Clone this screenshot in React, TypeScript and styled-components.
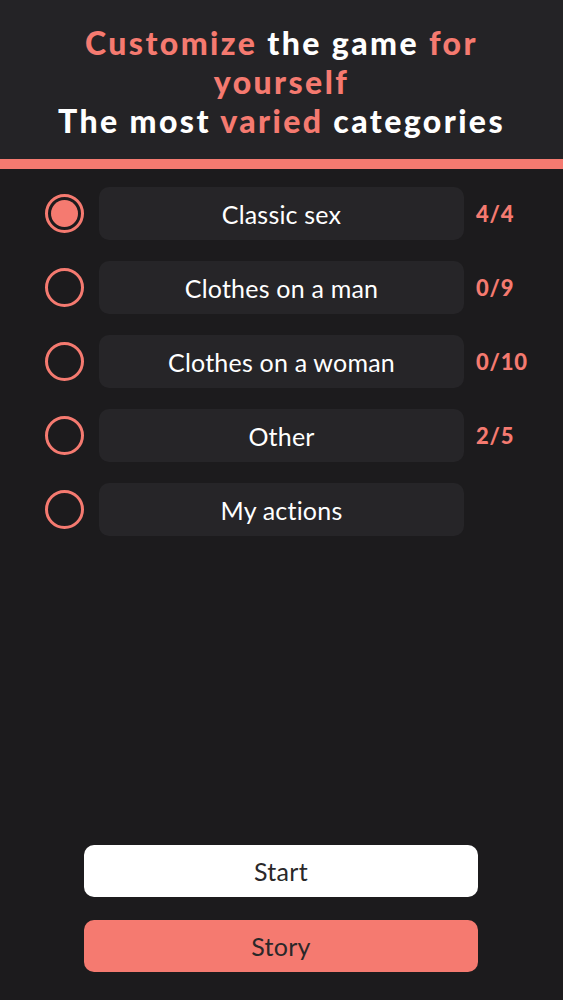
import React, { useState } from "react";
import styled, { createGlobalStyle } from "styled-components";

const Global = createGlobalStyle`
  html, body { margin: 0; padding: 0; background: #1c1b1d; }
  body { font-family: "Lato", "Open Sans", sans-serif; }
`;

const SALMON = "#f57a70";

const Page = styled.div`
  width: 563px;
  height: 1000px;
  display: flex;
  flex-direction: column;
  background: #1c1b1d;
  overflow: hidden;
`;

const Header = styled.header`
  background: #242326;
  padding: 23px 20px 19px;
  border-bottom: 10px solid ${SALMON};
  text-align: center;
`;

const Title = styled.h1`
  margin: 0;
  font-family: "Lato", sans-serif;
  font-weight: 900;
  font-size: 32px;
  line-height: 39px;
  color: #ffffff;
  letter-spacing: 2.4px;
`;

const Accent = styled.span`
  color: ${SALMON};
`;

const Nowrap = styled.span`
  white-space: nowrap;
`;

const List = styled.div`
  display: flex;
  flex-direction: column;
  gap: 21px;
  padding: 18px 0 0 45px;
`;

const Row = styled.div`
  display: flex;
  align-items: center;
  gap: 15px;
`;

const Radio = styled.button<{ $on: boolean }>`
  width: 39px;
  height: 39px;
  border-radius: 50%;
  border: 3px solid ${SALMON};
  padding: 3px;
  background: transparent;
  box-sizing: border-box;
  display: flex;
  cursor: pointer;
  &::after {
    content: "";
    flex: 1;
    border-radius: 50%;
    background: ${(p) => (p.$on ? SALMON : "transparent")};
  }
`;

const Item = styled.div`
  width: 365px;
  height: 53px;
  border-radius: 10px;
  background: #262528;
  color: #ffffff;
  display: flex;
  align-items: center;
  justify-content: center;
  font-family: "Lato", sans-serif;
  font-size: 25px;
  font-weight: 400;
  letter-spacing: 0.2px;
`;

const Count = styled.span`
  color: ${SALMON};
  font-family: "Lato", sans-serif;
  font-weight: 900;
  font-size: 22px;
  letter-spacing: 0.8px;
  margin-left: -3px;
`;

const Spacer = styled.div`
  flex: 1;
`;

const Buttons = styled.div`
  display: flex;
  flex-direction: column;
  gap: 23px;
  padding: 0 85px 28px 84px;
`;

const Btn = styled.button<{ $variant: "light" | "accent" }>`
  height: 52px;
  border: none;
  border-radius: 10px;
  background: ${(p) => (p.$variant === "light" ? "#ffffff" : SALMON)};
  color: #2a2829;
  font-family: "Lato", sans-serif;
  font-size: 25px;
  letter-spacing: 0.3px;
  cursor: pointer;
`;

const categories = [
  { name: "Classic sex", count: "4/4" },
  { name: "Clothes on a man", count: "0/9" },
  { name: "Clothes on a woman", count: "0/10" },
  { name: "Other", count: "2/5" },
  { name: "My actions", count: "" },
];

export default function App() {
  const [sel, setSel] = useState(0);
  return (
    <Page>
      <Global />
      <Header>
        <Title>
          <Nowrap>
            <Accent>Customize</Accent> the game <Accent>for</Accent>
          </Nowrap>
          <br />
          <Accent>yourself</Accent>
          <br />
          <Nowrap>
            The most <Accent>varied</Accent> categories
          </Nowrap>
        </Title>
      </Header>
      <List>
        {categories.map((c, i) => (
          <Row key={c.name}>
            <Radio $on={sel === i} onClick={() => setSel(i)} aria-label={c.name} />
            <Item>{c.name}</Item>
            <Count>{c.count}</Count>
          </Row>
        ))}
      </List>
      <Spacer />
      <Buttons>
        <Btn $variant="light">Start</Btn>
        <Btn $variant="accent">Story</Btn>
      </Buttons>
    </Page>
  );
}
